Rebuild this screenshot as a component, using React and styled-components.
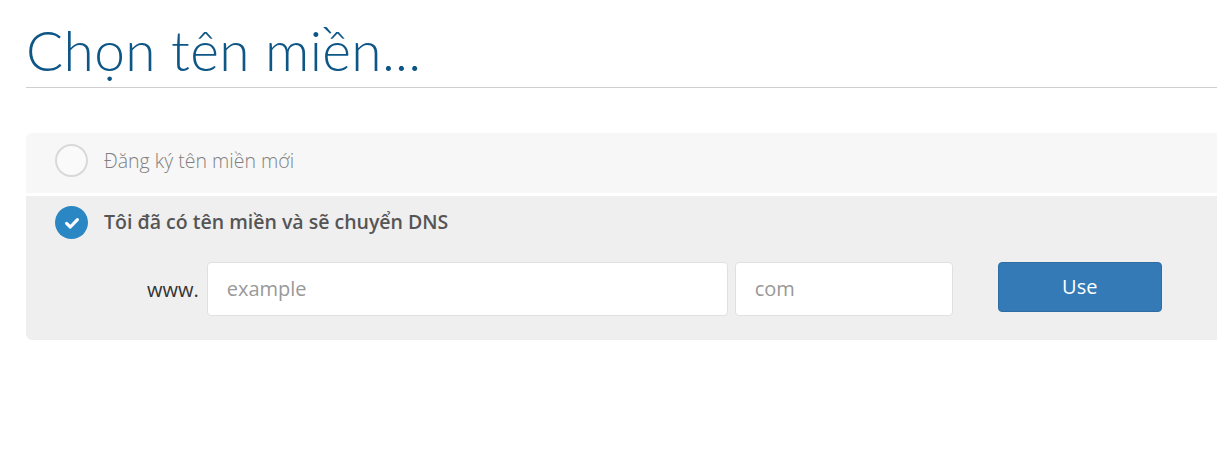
import React from "react";
import styled, { createGlobalStyle } from "styled-components";

const Global = createGlobalStyle`
  html, body { margin: 0; padding: 0; background: #fff; overflow: hidden; }
  body { font-family: "Open Sans", "Liberation Sans", sans-serif; }
  * { box-sizing: border-box; }
`;

const Page = styled.div`
  padding: 0 0 0 26px;
  width: calc(100% + 40px);
`;

const Heading = styled.h1`
  margin: 0;
  padding-top: 21px;
  padding-bottom: 8px;
  font-family: "Lato", "Open Sans", sans-serif;
  font-weight: 300;
  font-size: 55px;
  line-height: 58px;
  letter-spacing: 0.35px;
  color: #0d5686;
  border-bottom: 1px solid #cfcfcf;
`;

const Options = styled.div`
  margin-top: 45px;
  display: flex;
  flex-direction: column;
  gap: 3px;
`;

const Panel = styled.div`
  background: ${(p) => (p.$active ? "#efefef" : "#f7f7f7")};
  border-radius: ${(p) => (p.$active ? "0 0 0 6px" : "6px 0 0 0")};
  padding: ${(p) => (p.$active ? "10px 29px 24px" : "11px 29px 16px")};
`;

const OptionRow = styled.label`
  display: flex;
  align-items: center;
  gap: 16px;
  cursor: pointer;
`;

const Radio = styled.span`
  width: 33px;
  height: 33px;
  flex: none;
  border-radius: 50%;
  display: flex;
  align-items: center;
  justify-content: center;
  background: ${(p) => (p.$checked ? "#2b87c4" : "#fafafa")};
  border: ${(p) => (p.$checked ? "none" : "2px solid #d9d9d9")};
`;

const Label = styled.span`
  font-size: 19.5px;
  line-height: 27px;
  margin-top: ${(p) => (p.$active ? "-3px" : "0")};
  font-weight: ${(p) => (p.$active ? 600 : 300)};
  color: ${(p) => (p.$active ? "#555" : "#808080")};
`;

const DomainRow = styled.div`
  display: flex;
  align-items: center;
  margin-top: 23px;
  padding-left: 92px;
`;

const Prefix = styled.span`
  font-size: 20px;
  color: #333;
  margin-right: 8px;
`;

const Input = styled.input`
  width: ${(p) => p.$w}px;
  height: 54px;
  border: 1px solid #e0e0e0;
  border-radius: 4px;
  background: #fff;
  padding: 0 19px 2px;
  font-family: "Open Sans", "Liberation Sans", sans-serif;
  font-size: 20px;
  color: #333;
  margin-right: 7px;
  outline: none;
  &::placeholder { color: #999; }
`;

const Button = styled.button`
  align-self: flex-start;
  margin-left: 38px;
  width: 164px;
  height: 50px;
  background: #337ab7;
  border: 1px solid #2e6da4;
  border-radius: 4px;
  color: #fff;
  font-family: "Open Sans", "Liberation Sans", sans-serif;
  font-size: 20px;
  line-height: 1;
  padding: 0;
  cursor: pointer;
`;

const Check = () => (
  <svg width="20" height="20" viewBox="0 0 24 24" fill="none" stroke="#fff" strokeWidth="3.8" strokeLinecap="round" strokeLinejoin="round">
    <polyline points="5.5,12.5 10,16.8 18.5,8" />
  </svg>
);

export default function App() {
  return (
    <>
      <Global />
      <Page>
        <Heading>Chọn tên miền...</Heading>
        <Options>
          <Panel>
            <OptionRow>
              <Radio />
              <Label>Đăng ký tên miền mới</Label>
            </OptionRow>
          </Panel>
          <Panel $active>
            <OptionRow>
              <Radio $checked>
                <Check />
              </Radio>
              <Label $active>Tôi đã có tên miền và sẽ chuyển DNS</Label>
            </OptionRow>
            <DomainRow>
              <Prefix>www.</Prefix>
              <Input $w={521} placeholder="example" />
              <Input $w={218} placeholder="com" />
              <Button>Use</Button>
            </DomainRow>
          </Panel>
        </Options>
      </Page>
    </>
  );
}
